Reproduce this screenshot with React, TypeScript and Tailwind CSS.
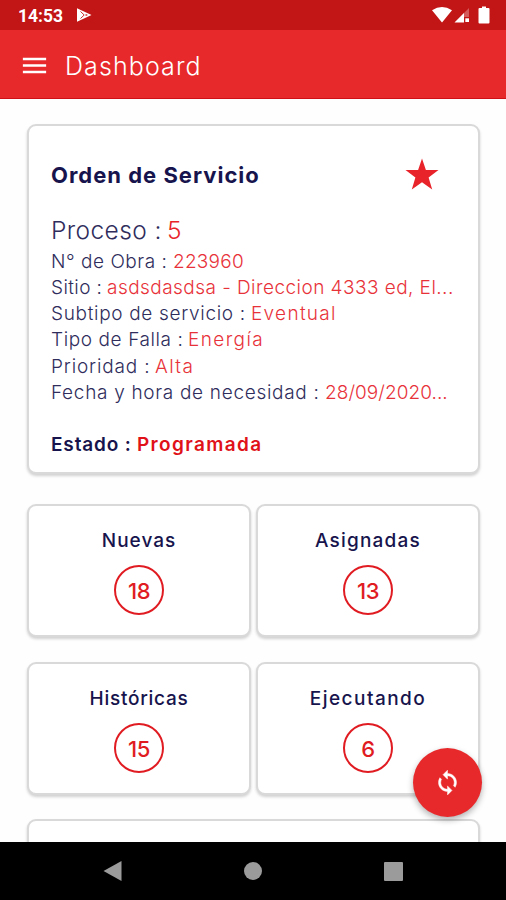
import clsx from "clsx";
import { MdMenu } from "react-icons/md";

type Field = {
  label: string;
  value: string;
  labelClass: string;
  valueClass: string;
};

type Counter = {
  title: string;
  count: number;
  titleClass: string;
};

const fields: Field[] = [
  { label: "N° de Obra :", value: "223960", labelClass: "w-[122px] tracking-[0.53px]", valueClass: "tracking-[0.25px]" },
  { label: "Sitio :", value: "asdsdasdsa - Direccion 4333 ed, El...", labelClass: "w-[56px] tracking-[0.4px]", valueClass: "tracking-[0.45px]" },
  { label: "Subtipo de servicio :", value: "Eventual", labelClass: "w-[200px] tracking-[0.68px]", valueClass: "tracking-[1.3px]" },
  { label: "Tipo de Falla :", value: "Energía", labelClass: "w-[137px] tracking-[0.6px]", valueClass: "tracking-[1.4px]" },
  { label: "Prioridad :", value: "Alta", labelClass: "w-[104px] tracking-[0.85px]", valueClass: "tracking-[1.4px]" },
  { label: "Fecha y hora de necesidad :", value: "28/09/2020...", labelClass: "w-[274px] tracking-[0.69px]", valueClass: "tracking-[0.05px]" },
];

const counters: Counter[] = [
  { title: "Nuevas", count: 18, titleClass: "tracking-[1px]" },
  { title: "Asignadas", count: 13, titleClass: "tracking-[1.2px]" },
  { title: "Históricas", count: 15, titleClass: "tracking-[0.75px]" },
  { title: "Ejecutando", count: 6, titleClass: "tracking-[1.45px]" },
];

const card =
  "rounded-[9px] border-2 border-[#d9d9d9] bg-white shadow-[0_2px_3px_rgba(0,0,0,0.18)]";

function StatusBar() {
  return (
    <div className="flex h-[30px] shrink-0 items-center bg-[#c21515] pl-[18px] pr-[16px] text-white">
      <span className="font-['Roboto'] text-[17.5px] font-bold leading-none pt-[3px]">
        14:53
      </span>
      <svg className="ml-[13px]" width="16" height="16" viewBox="0 0 16 16">
        <path d="M1 1.2 15.5 8 1 14.8Z" fill="#fff" />
        <path d="M4.5 4.5 8.2 8 4.5 11.5" fill="none" stroke="#c21515" strokeWidth=".9" />
        <path d="m9.6 7 2.4 1-2.4 1Z" fill="#c21515" />
      </svg>
      <div className="ml-auto flex items-center">
        <svg width="20" height="16" viewBox="0 0 20 16">
          <path d="M0 3.2Q10-3 20 3.2L10 15.5Z" fill="#fff" />
        </svg>
        <svg className="ml-[2px]" width="16" height="16" viewBox="0 0 16 16">
          <path d="M15 1v9h-5v5H1Z" fill="#fff" fillOpacity=".3" />
          <path d="M10 6v9.5H.5Z" fill="#fff" />
          <path d="M11.3 11.3h3.7v3.7h-3.7Z" fill="#fff" />
        </svg>
        <svg className="ml-[8px]" width="12" height="18" viewBox="0 0 12 18">
          <path d="M4 .5h4V2h2.5a1 1 0 0 1 1 1v13.5a1 1 0 0 1-1 1h-9a1 1 0 0 1-1-1V3a1 1 0 0 1 1-1H4Z" fill="#fff" />
        </svg>
      </div>
    </div>
  );
}

function OrderCard() {
  return (
    <section className={clsx(card, "h-[350px] pl-[22px] pr-[39px] text-[19px]")}>
      <div className="flex items-center justify-between pt-[29px]">
        <h2 className="text-[22px] font-bold leading-[40px] tracking-[1px] text-[#17144d]">
          Orden de Servicio
        </h2>
        <svg className="mb-[2px]" width="34" height="32" viewBox="0 0 34 32">
          <path
            d="m17 .5 3.9 11.4 12.6.1-9.9 7.4 3.6 12L17 24.3 6.8 31.4l3.6-12L.5 12l12.6-.1Z"
            fill="#e8232a"
          />
        </svg>
      </div>

      <div className="mt-[17px] flex whitespace-nowrap font-light text-[#2f2d5c]">
        <span className="w-[116px] text-[24.5px] leading-[37px] tracking-[0.4px]">
          Proceso :
        </span>
        <span className="text-[24.5px] leading-[37px] text-[#e8232a]">5</span>
      </div>

      {fields.map((f) => (
        <div
          key={f.label}
          className="flex whitespace-nowrap font-light leading-[26.15px] text-[#2f2d5c]"
        >
          <span className={clsx("shrink-0", f.labelClass)}>{f.label}</span>
          <span className={clsx("text-[#e8323a]", f.valueClass)}>{f.value}</span>
        </div>
      ))}

      <div className="mt-[26px] flex whitespace-nowrap font-semibold leading-[26px] text-[#17144d]">
        <span className="w-[86px] tracking-[0.85px]">Estado :</span>
        <span className="tracking-[1.35px] text-[#e01119]">Programada</span>
      </div>
    </section>
  );
}

function CounterCard({ title, count, titleClass }: Counter) {
  return (
    <section className={clsx(card, "flex h-[133px] flex-col items-center pt-[22px]")}>
      <h3 className={clsx("text-[19px] font-medium leading-[26px] text-[#17144d]", titleClass)}>
        {title}
      </h3>
      <span className="mt-[11px] flex size-[50px] items-center justify-center rounded-full border-2 border-[#e01c22] pt-[3px] text-[22px] font-medium tracking-[-0.4px] text-[#e01c22]">
        {count}
      </span>
    </section>
  );
}

function SyncIcon() {
  return (
    <svg width="27" height="27" viewBox="0 0 24 24">
      <path
        d="M12 4V1L8 5l4 4V6c3.31 0 6 2.69 6 6 0 1.01-.25 1.97-.7 2.8l1.46 1.46C19.54 15.03 20 13.57 20 12c0-4.42-3.58-8-8-8zm0 14c-3.31 0-6-2.69-6-6 0-1.01.25-1.97.7-2.8L5.24 7.74C4.46 8.97 4 10.43 4 12c0 4.42 3.58 8 8 8v3l4-4-4-4v3z"
        fill="currentColor"
        stroke="currentColor"
        strokeWidth=".4"
      />
    </svg>
  );
}

function NavBar() {
  return (
    <nav className="flex h-[58px] shrink-0 items-center justify-between bg-black px-[103px] text-[#9b9b9b]">
      <svg width="19" height="22" viewBox="0 0 19 22">
        <path d="M18.5 1v20L.5 11Z" fill="currentColor" />
      </svg>
      <span className="size-[18px] rounded-full bg-[#9b9b9b]" />
      <span className="size-[19px] rounded-[1px] bg-[#9b9b9b]" />
    </nav>
  );
}

export default function App() {
  return (
    <div className="flex h-[900px] w-[506px] flex-col overflow-hidden bg-white font-['Inter',sans-serif]">
      <StatusBar />

      <header className="flex h-[69px] shrink-0 items-center border-b border-[#cf1016] bg-[#e8292b] pl-[19px] text-white">
        <MdMenu size={31} className="mt-[2px]" />
        <h1 className="ml-[15px] pt-[5px] text-[25px] font-light tracking-[1.1px]">
          Dashboard
        </h1>
      </header>

      <main className="relative h-[743px] shrink overflow-hidden bg-[#fefefe] pl-[27px] pr-[26px] pt-[25px]">
        <OrderCard />

        <div className="mt-[30px] grid grid-cols-2 gap-x-[5px] gap-y-[25px]">
          {counters.map((c) => (
            <CounterCard key={c.title} {...c} />
          ))}
        </div>

        <section className={clsx(card, "mt-[24px] h-[133px]")} />

        <button className="absolute bottom-[25px] right-[24px] flex size-[69px] items-center justify-center rounded-full bg-[#e8292b] text-white shadow-[0_3px_6px_rgba(0,0,0,0.3)]">
          <SyncIcon />
        </button>
      </main>

      <NavBar />
    </div>
  );
}
